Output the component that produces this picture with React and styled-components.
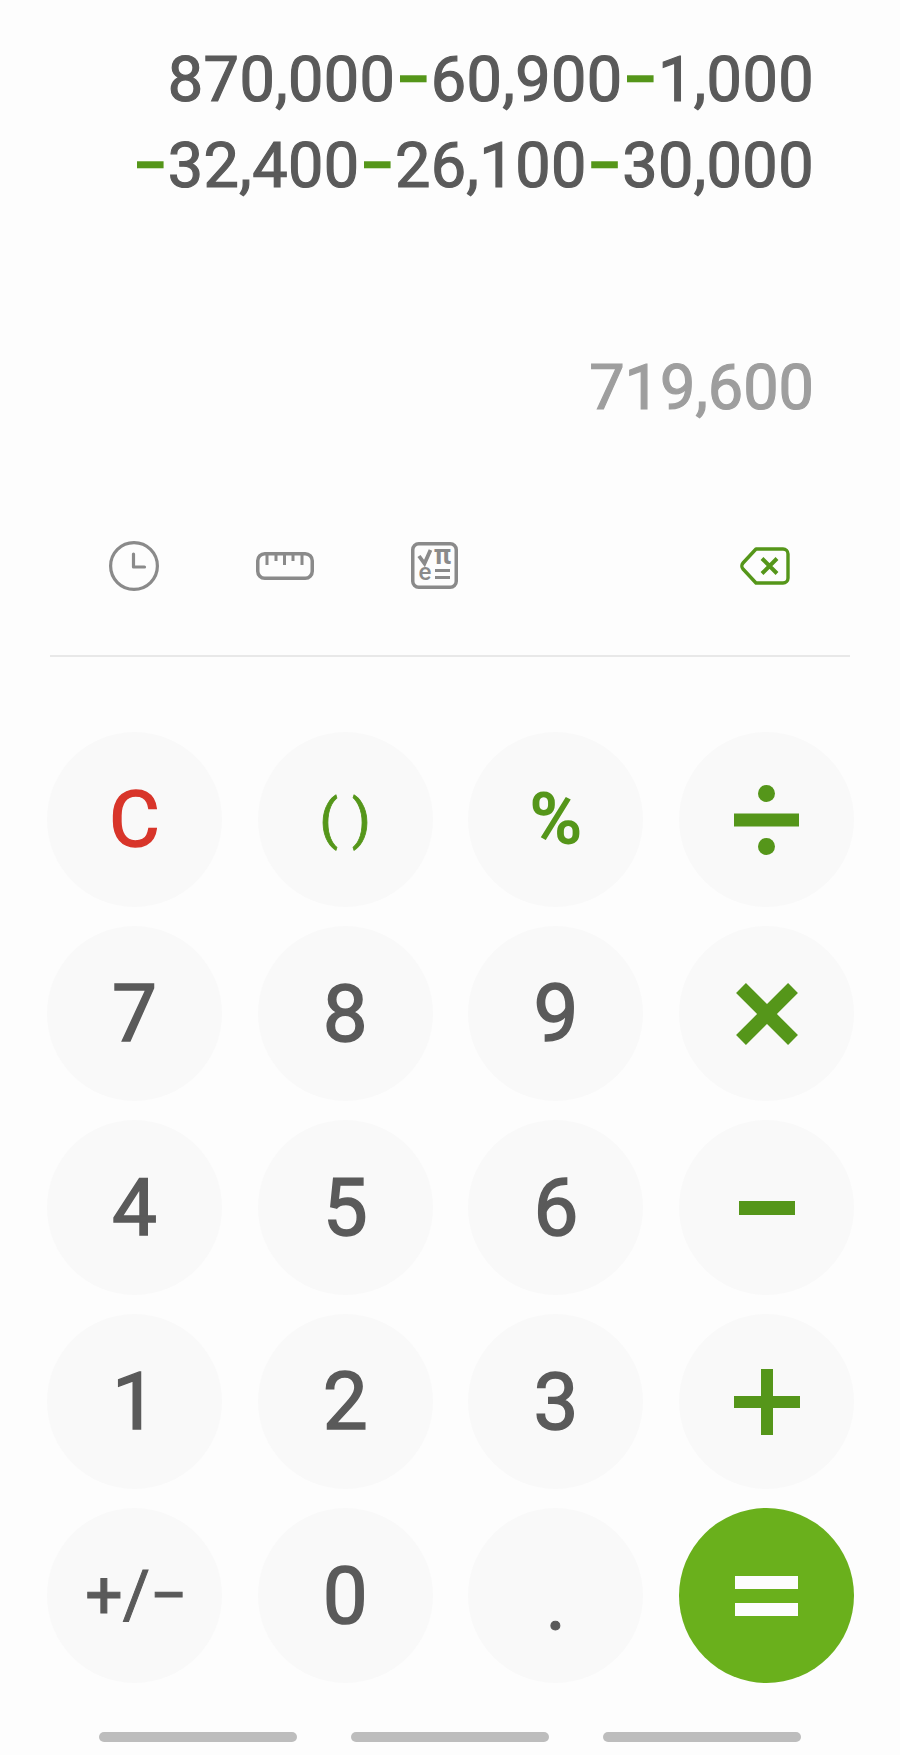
import React from 'react';
import styled, { createGlobalStyle } from 'styled-components';

const GREEN = '#55961a';
const GRAY = '#8a8a8a';

const GlobalStyle = createGlobalStyle`
    html, body {
        margin: 0;
        padding: 0;
        background: #fdfdfd;
    }
    body {
        font-family: 'Roboto', 'Liberation Sans', sans-serif;
    }
`;

const Screen = styled.div`
    width: 900px;
    height: 1755px;
    overflow: hidden;
    background: #fdfdfd;
`;

const Display = styled.section`
    padding: 37px 86px 0 0;
    text-align: right;
`;

const Line = styled.div`
    height: 85.5px;
    line-height: 85.5px;
    font-size: 63px;
    font-weight: 400;
    letter-spacing: 0.4px;
    -webkit-text-stroke: 1.2px #5a5a5a;
    color: #5a5a5a;
    white-space: nowrap;
`;

const Op = styled.span`
    color: ${GREEN};
    font-weight: 700;
    -webkit-text-stroke: 0;
`;

const Result = styled.div`
    margin-top: 137px;
    height: 85px;
    line-height: 85px;
    font-size: 63px;
    font-weight: 400;
    -webkit-text-stroke: 1.2px #9e9e9e;
    color: #9e9e9e;
`;

const Toolbar = styled.div`
    display: flex;
    align-items: center;
    gap: 97px;
    height: 51px;
    margin-top: 110px;
    padding: 0 110px 0 109px;
`;

const Backspace = styled.div`
    display: flex;
    margin-left: auto;
`;

const Divider = styled.hr`
    height: 2px;
    margin: 64px 50px 0;
    border: 0;
    background: #e8e8e8;
`;

const Keypad = styled.div`
    display: grid;
    grid-template-columns: repeat(4, 175px);
    grid-auto-rows: 175px;
    column-gap: 35.7px;
    row-gap: 19px;
    margin-top: 75px;
    padding-left: 47px;
`;

const Key = styled.button`
    display: flex;
    align-items: center;
    justify-content: center;
    padding: ${(p) => p.$pad || 0};
    border: 0;
    border-radius: 50%;
    background: ${(p) => (p.$accent ? '#6ab01c' : '#f9f9f9')};
    color: ${(p) => p.$color || '#5a5a5a'};
    font-family: inherit;
    font-size: ${(p) => p.$size || 80}px;
    font-weight: ${(p) => p.$weight || 400};
    letter-spacing: ${(p) => p.$spacing || 0}px;
    -webkit-text-stroke: ${(p) => p.$stroke ?? 1.5}px ${(p) => p.$color || '#5a5a5a'};
    line-height: 1;
`;

const NavBar = styled.div`
    display: flex;
    gap: 54px;
    margin-top: 49px;
    padding-left: 99px;
`;

const NavPill = styled.div`
    width: 198px;
    height: 10px;
    border-radius: 5px;
    background: #bdbdbd;
`;

const IconSvg = styled.svg`
    display: block;
    overflow: visible;
`;

const ClockIcon = () => (
    <IconSvg width="50" height="50" viewBox="0 0 50 50" fill="none" stroke={GRAY} strokeWidth="3.2">
        <circle cx="25" cy="25" r="23.4" />
        <path d="M24.5 13v13h11" strokeLinecap="round" strokeLinejoin="round" />
    </IconSvg>
);

const RulerIcon = () => (
    <IconSvg width="58" height="28" viewBox="0 0 58 28" fill="none" stroke={GRAY} strokeWidth="3.5">
        <rect x="1.75" y="1.75" width="54.5" height="24.5" rx="7" />
        <path d="M11 2v11M20 2v7M28.5 2v11M37 2v7M46 2v11" strokeWidth="3" />
    </IconSvg>
);

const FormulaIcon = () => (
    <IconSvg width="47" height="47" viewBox="0 0 47 47" fill="none">
        <rect x="1.75" y="1.75" width="43.5" height="43.5" rx="6" stroke={GRAY} strokeWidth="3.5" />
        <path d="M8 14l5.5 7.5 6-13.5" stroke={GRAY} strokeWidth="3.8" />
        <text x="31.5" y="21.5" textAnchor="middle" fontFamily="'Roboto', sans-serif" fontSize="27" fontWeight="700" fill={GRAY}>π</text>
        <text x="14" y="38" textAnchor="middle" fontFamily="'Roboto', sans-serif" fontSize="24" fontWeight="500" fill={GRAY}>e</text>
        <path d="M24 28.5h15M24 35.5h15" stroke={GRAY} strokeWidth="3.2" />
    </IconSvg>
);

const BackspaceIcon = () => (
    <IconSvg width="50" height="38" viewBox="0 0 50 38" fill="none" stroke={GREEN} strokeWidth="3.4">
        <path d="M16 2h27a5 5 0 0 1 5 5v24a5 5 0 0 1-5 5H16L3 22a4.5 4.5 0 0 1 0-6z" strokeLinejoin="round" />
        <path d="M22 11.5l15 15M37 11.5l-15 15" strokeWidth="4" />
    </IconSvg>
);

const DivideIcon = () => (
    <IconSvg width="65" height="70" viewBox="0 0 65 70" fill={GREEN}>
        <circle cx="32.5" cy="8.5" r="8.5" />
        <rect x="0" y="28.5" width="65" height="13" />
        <circle cx="32.5" cy="61.5" r="8.5" />
    </IconSvg>
);

const TimesIcon = () => (
    <IconSvg width="60" height="60" viewBox="0 0 60 60" fill="none" stroke={GREEN} strokeWidth="14">
        <path d="M4 4l52 52M56 4L4 56" />
    </IconSvg>
);

const MinusIcon = () => (
    <IconSvg width="56" height="14" viewBox="0 0 56 14" fill={GREEN}>
        <rect width="56" height="14" />
    </IconSvg>
);

const PlusIcon = () => (
    <IconSvg width="66" height="66" viewBox="0 0 66 66" fill={GREEN}>
        <path d="M27 0h12v27h27v12H39v27H27V39H0V27h27z" />
    </IconSvg>
);

const EqualsIcon = () => (
    <IconSvg width="63" height="40" viewBox="0 0 63 40" fill="#fdfdfd">
        <rect width="63" height="13" />
        <rect y="27" width="63" height="13" />
    </IconSvg>
);

const App = () => (
    <Screen>
        <GlobalStyle />
        <Display>
            <Line>870,000<Op>−</Op>60,900<Op>−</Op>1,000</Line>
            <Line><Op>−</Op>32,400<Op>−</Op>26,100<Op>−</Op>30,000</Line>
            <Result>719,600</Result>
        </Display>

        <Toolbar>
            <ClockIcon />
            <RulerIcon />
            <FormulaIcon />
            <Backspace><BackspaceIcon /></Backspace>
        </Toolbar>
        <Divider />

        <Keypad>
            <Key $color="#d8352a" $size={78}>C</Key>
            <Key $color={GREEN} $size={54} $stroke={0.8} $spacing={14} $pad="0 0 0 14px">()</Key>
            <Key $color={GREEN} $size={72} $weight={700} $stroke={0}>%</Key>
            <Key aria-label="divide"><DivideIcon /></Key>

            <Key>7</Key>
            <Key>8</Key>
            <Key>9</Key>
            <Key aria-label="multiply"><TimesIcon /></Key>

            <Key>4</Key>
            <Key>5</Key>
            <Key>6</Key>
            <Key aria-label="subtract"><MinusIcon /></Key>

            <Key>1</Key>
            <Key>2</Key>
            <Key>3</Key>
            <Key aria-label="add"><PlusIcon /></Key>

            <Key $size={66} $stroke={1} $pad="0 0 0 4px">+/−</Key>
            <Key>0</Key>
            <Key $pad="14px 0 0" $stroke={1}>.</Key>
            <Key $accent aria-label="equals"><EqualsIcon /></Key>
        </Keypad>

        <NavBar>
            <NavPill />
            <NavPill />
            <NavPill />
        </NavBar>
    </Screen>
);

export default App;
